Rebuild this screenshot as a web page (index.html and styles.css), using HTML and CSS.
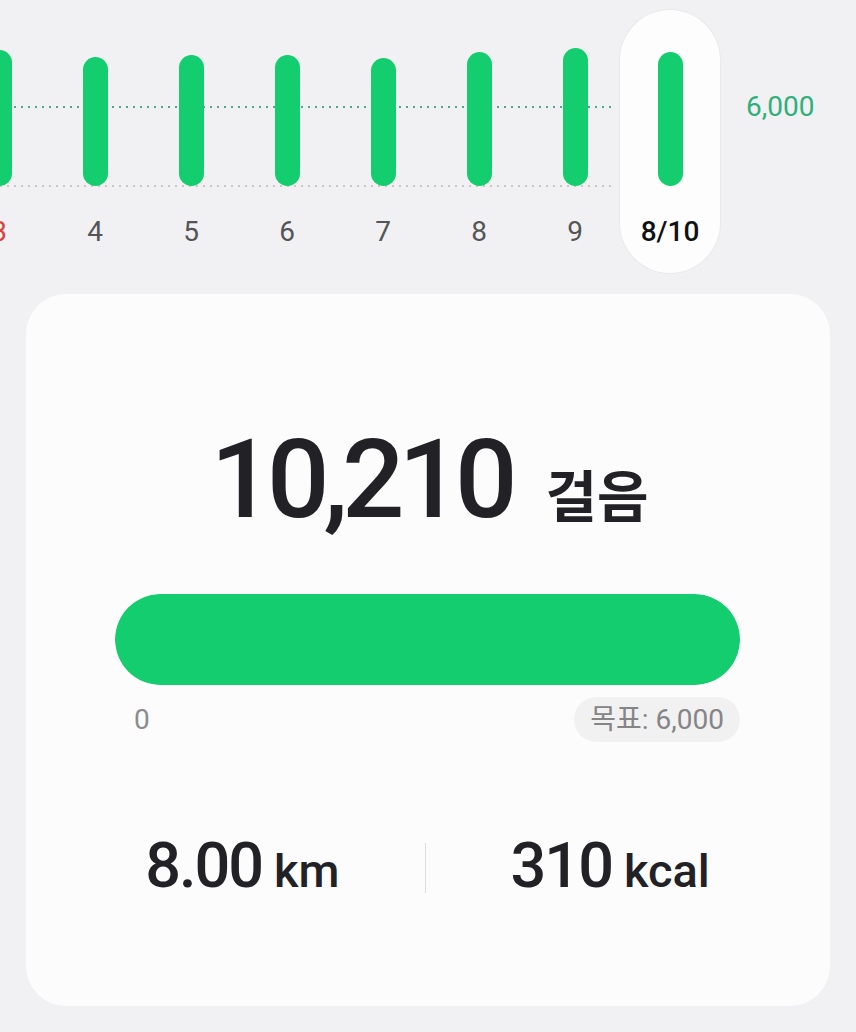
FILE: index.html
```html
<!DOCTYPE html>
<html lang="ko">
<head>
    <meta charset="UTF-8">
    <meta name="viewport" content="width=device-width, initial-scale=1.0">
    <title>걸음 수</title>
    <link rel="stylesheet" href="styles.css">
</head>
<body>

    <!-- Daily steps chart -->
    <section class="chart">
        <div class="days">
            <div class="day">
                <div class="bar-area"><div class="bar" style="height: 136px"></div></div>
                <span class="day-label sunday">3</span>
            </div>
            <div class="day">
                <div class="bar-area"><div class="bar" style="height: 129px"></div></div>
                <span class="day-label">4</span>
            </div>
            <div class="day">
                <div class="bar-area"><div class="bar" style="height: 131px"></div></div>
                <span class="day-label">5</span>
            </div>
            <div class="day">
                <div class="bar-area"><div class="bar" style="height: 131px"></div></div>
                <span class="day-label">6</span>
            </div>
            <div class="day">
                <div class="bar-area"><div class="bar" style="height: 128px"></div></div>
                <span class="day-label">7</span>
            </div>
            <div class="day">
                <div class="bar-area"><div class="bar" style="height: 134px"></div></div>
                <span class="day-label">8</span>
            </div>
            <div class="day">
                <div class="bar-area"><div class="bar" style="height: 138px"></div></div>
                <span class="day-label">9</span>
            </div>
        </div>
        <div class="day today">
            <div class="bar-area"><div class="bar" style="height: 134px"></div></div>
            <span class="day-label">8/10</span>
        </div>
        <span class="goal-line-label">6,000</span>
    </section>

    <!-- Today summary -->
    <section class="summary">
        <div class="steps">
            <span class="steps-count">10,210</span><span class="steps-unit">걸음</span>
        </div>

        <div class="progress">
            <div class="progress-fill" style="width: 100%"></div>
        </div>
        <div class="progress-scale">
            <span class="scale-min">0</span>
            <span class="scale-goal">목표: 6,000</span>
        </div>

        <div class="stats">
            <div class="stat"><span class="stat-value">8.00</span><span class="stat-unit">km</span></div>
            <div class="stat-divider"></div>
            <div class="stat"><span class="stat-value">310</span><span class="stat-unit">kcal</span></div>
        </div>
    </section>

</body>
</html>
```

FILE: styles.css
```css
body {
    background-color: #f1f1f3;
    font-family: 'Roboto', 'Noto Sans CJK KR', sans-serif;
    color: #222226;
    margin: 0;
    padding: 0;
    overflow: hidden;
}

/* Chart */

.chart {
    display: flex;
    align-items: flex-start;
    margin-left: -49px;
    padding-top: 10px;
}

.days {
    display: flex;
    background-image:
        repeating-linear-gradient(to right, #4ea88c 0 2px, transparent 2px 7px),
        repeating-linear-gradient(to right, #c6c8c8 0 2px, transparent 2px 7px);
    background-size: calc(100% - 8px) 2px, calc(100% - 8px) 2px;
    background-position: 0 96px, 0 175px;
    background-repeat: no-repeat;
}

.day {
    width: 96px;
    display: flex;
    flex-direction: column;
    align-items: center;
    padding-bottom: 24px;
}

.bar-area {
    height: 176px;
    display: flex;
    align-items: flex-end;
}

.bar {
    width: 25px;
    border-radius: 13px;
    background-color: #14cd6e;
}

.day-label {
    margin-top: 29px;
    font-size: 28px;
    line-height: 34px;
    color: #555557;
}

.day-label.sunday {
    color: #d9433d;
}

.day.today {
    width: 100px;
    margin-left: -3px;
    background-color: #fdfdfe;
    border-radius: 50px;
    box-shadow: 0 0 0 1px #e9e9eb;
}

.day.today .day-label {
    color: #111;
    font-weight: 500;
}

.goal-line-label {
    margin-left: 26px;
    margin-top: 80px;
    font-size: 28px;
    line-height: 34px;
    color: #2fb07a;
}

/* Summary card */

.summary {
    margin: 21px 26px 0;
    padding: 131px 90px 104px 89px;
    background-color: #fcfcfd;
    border-radius: 40px;
}

.steps {
    text-align: center;
    font-size: 110px;
    line-height: 110px;
    padding-left: 4px;
}

.steps-count {
    font-weight: 500;
    letter-spacing: -6px;
}

.steps-unit {
    margin-left: 34px;
    font-family: 'Noto Sans CJK KR', sans-serif;
    font-size: 56px;
    line-height: 1;
    font-weight: 700;
}

.progress {
    margin-top: 59px;
    height: 91px;
    border-radius: 46px;
    background-color: #e9e9eb;
    overflow: hidden;
}

.progress-fill {
    height: 100%;
    border-radius: 46px;
    background-color: #14cd6e;
}

.progress-scale {
    display: flex;
    justify-content: space-between;
    align-items: center;
    margin-top: 12px;
}

.scale-min {
    margin-left: 19px;
    font-size: 28px;
    color: #8c8c8e;
}

.scale-goal {
    padding: 5px 16px;
    font-size: 28px;
    line-height: 35px;
    color: #858587;
    background-color: #f1f1f2;
    border-radius: 23px;
}

.stats {
    display: flex;
    justify-content: center;
    align-items: center;
    gap: 85px;
    margin-top: 92px;
}

.stat {
    font-size: 63px;
    line-height: 63px;
}

.stat-value {
    font-weight: 500;
    letter-spacing: -2px;
}

.stat-unit {
    margin-left: 12px;
    font-size: 47px;
    font-weight: 500;
}

.stat-divider {
    width: 1px;
    height: 50px;
    background-color: #dcdcde;
}
```
